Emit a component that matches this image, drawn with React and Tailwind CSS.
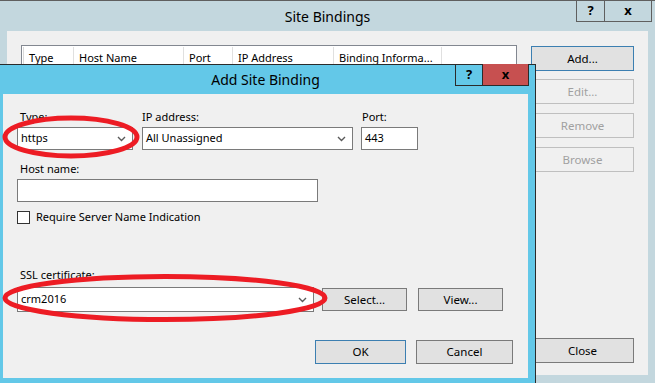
import React from "react";

function Chevron() {
  return (
    <svg width="9" height="6" viewBox="0 0 9 6" className="shrink-0">
      <path d="M1 1 L4.5 4.5 L8 1" stroke="#5a5a5a" strokeWidth="1.4" fill="none" />
    </svg>
  );
}

function Btn({ children, className = "", def = false, disabled = false }) {
  const base = disabled
    ? "bg-[#f0f0f0] border-[#bfbfbf] text-[#a0a0a0]"
    : def
    ? "bg-[#e1e1e1] border-[#3c7fb1] text-black"
    : "bg-[#e1e1e1] border-[#7a7a7a] text-black";
  return (
    <div className={`flex items-center justify-center border text-[11.5px] ${base} ${className}`}>
      {children}
    </div>
  );
}

function Select({ value, className = "" }) {
  return (
    <div className={`flex items-center justify-between bg-white border border-[#7a7a7a] pl-[3px] pr-[6px] ${className}`}>
      <span>{value}</span>
      <Chevron />
    </div>
  );
}

export default function App() {
  const cols = [
    { t: "Type", w: "w-[50px]" },
    { t: "Host Name", w: "w-[110px]" },
    { t: "Port", w: "w-[49px]" },
    { t: "IP Address", w: "w-[101px]" },
    { t: "Binding Informa...", w: "w-[108px]" },
  ];
  return (
    <div className="relative w-[655px] h-[383px] overflow-hidden bg-[#c3d7de] border-t border-[#5f5f5f] font-['Segoe_UI','Noto_Sans',sans-serif] text-black">
      {/* Background window title bar */}
      <div className="relative h-[30px] flex items-center justify-center text-[14px]">
        <span>Site Bindings</span>
        <div className="absolute right-[3px] top-[-1px] h-[22px] flex border border-t-0 border-[#5f5f5f]">
          <div className="w-[28px] flex items-center justify-center border-r border-[#5f5f5f] text-[13px] font-bold">?</div>
          <div className="w-[46px] flex items-center justify-center text-[13px] font-bold">x</div>
        </div>
      </div>

      {/* Background window content */}
      <div className="mx-[7px] h-[344px] bg-[#f0f0f0] flex pt-[14px] pl-[14px] gap-[14px]">
        <div className="w-[496px] h-[310px] bg-white border border-[#828790] pt-[1px] pl-[1px]">
          <div className="flex h-[22px] text-[11px] border-l border-[#d9d9d9]">
            {cols.map((c) => (
              <div key={c.t} className={`${c.w} shrink-0 whitespace-nowrap overflow-hidden border-r border-[#e0e0e0] pl-[5px] flex items-center`}>
                {c.t}
              </div>
            ))}
          </div>
        </div>
        <div className="w-[103px] flex flex-col">
          <Btn def className="h-[25px] mt-[1px]">Add...</Btn>
          <Btn disabled className="h-[25px] mt-[8px]">Edit...</Btn>
          <Btn disabled className="h-[25px] mt-[9px]">Remove</Btn>
          <Btn disabled className="h-[25px] mt-[9px]">Browse</Btn>
          <Btn className="h-[25px] mt-[166px]">Close</Btn>
        </div>
      </div>

      {/* Add Site Binding dialog */}
      <div className="absolute left-[-5px] top-[63px] w-[541px] h-[322px] border border-[#2b2b2b] bg-[#63c8e8] flex flex-col">
        <div className="relative h-[29px] shrink-0 flex items-center justify-center text-[14px]">
          <span>Add Site Binding</span>
          <div className="absolute right-[6px] top-[-1px] h-[22px] flex border border-t-0 border-[#2b2b2b]">
            <div className="w-[27px] flex items-center justify-center border-r border-[#2b2b2b] text-[13px] font-bold">?</div>
            <div className="w-[45px] flex items-center justify-center bg-[#c75050] text-[13px] font-bold">x</div>
          </div>
        </div>
        <div className="mx-[7px] h-[284px] bg-[#f0f0f0] pl-[14px] pt-[15px] text-[11px]">
          {/* Row 1 */}
          <div className="flex">
            <div className="flex flex-col w-[116px]">
              <div className="h-[16px] leading-[16px] pl-[3px]">Type:</div>
              <Select value="https" className="mt-[2px] h-[23px]" />
            </div>
            <div className="flex flex-col w-[211px] ml-[9px]">
              <div className="h-[16px] leading-[16px]">IP address:</div>
              <Select value="All Unassigned" className="mt-[2px] h-[23px]" />
            </div>
            <div className="flex flex-col w-[57px] ml-[8px]">
              <div className="h-[16px] leading-[16px] pl-[1px]">Port:</div>
              <div className="mt-[2px] h-[23px] bg-white border border-[#7a7a7a] pl-[3px] flex items-center">443</div>
            </div>
          </div>
          {/* Row 2 */}
          <div className="mt-[11px] h-[16px] leading-[16px] pl-[3px]">Host name:</div>
          <div className="mt-[2px] w-[301px] h-[23px] bg-white border border-[#7a7a7a]" />
          {/* Row 3 */}
          <div className="mt-[9px] flex items-center h-[13px]">
            <div className="w-[13px] h-[13px] bg-white border border-[#333]" />
            <span className="ml-[6px]">Require Server Name Indication</span>
          </div>
          {/* Row 4 */}
          <div className="mt-[43px] h-[16px] leading-[16px] pl-[3px]">SSL certificate:</div>
          <div className="mt-[4px] flex items-center">
            <Select value="crm2016" className="w-[297px] h-[25px]" />
            <Btn className="ml-[8px] w-[85px] h-[23px]">Select...</Btn>
            <Btn className="ml-[11px] w-[85px] h-[23px]">View...</Btn>
          </div>
          {/* Row 5 */}
          <div className="mt-[28px] flex justify-end pr-[15px] gap-[10px]">
            <Btn def className="w-[91px] h-[24px]">OK</Btn>
            <Btn className="w-[97px] h-[24px]">Cancel</Btn>
          </div>
        </div>
      </div>

      {/* Red annotation ellipses */}
      <svg className="absolute left-0 top-0 pointer-events-none" width="655" height="383" viewBox="0 0 655 383">
        <ellipse cx="71" cy="136" rx="66" ry="19" fill="none" stroke="#ed1c24" strokeWidth="5" />
        <ellipse cx="165" cy="297" rx="160" ry="21.5" fill="none" stroke="#ed1c24" strokeWidth="5" />
      </svg>
    </div>
  );
}
